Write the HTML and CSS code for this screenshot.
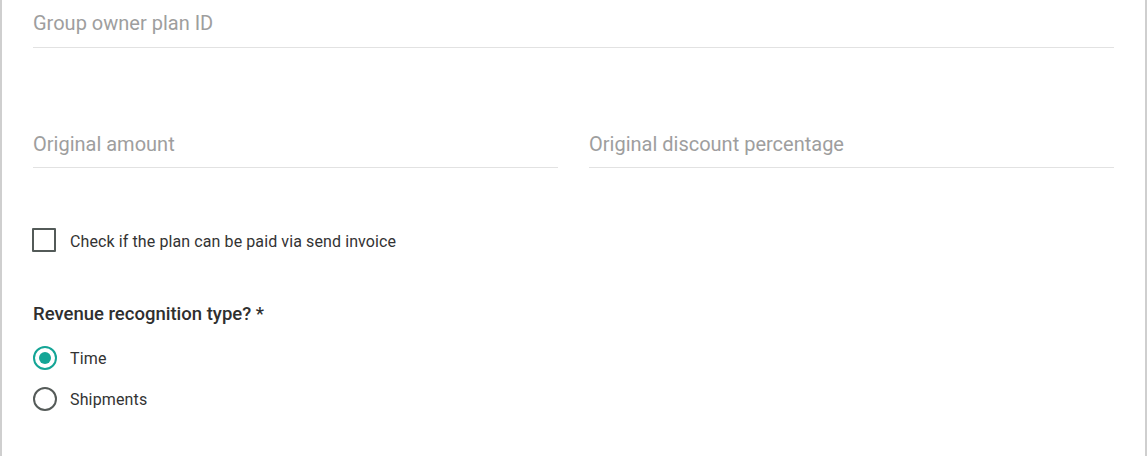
FILE: index.html
```html
<!DOCTYPE html>
<html>
<head>
<meta charset="utf-8">
<link rel="stylesheet" href="styles.css">
</head>
<body>
<div class="card">
  <div class="field full">
    <span class="placeholder">Group owner plan ID</span>
  </div>
  <div class="row">
    <div class="field">
      <span class="placeholder">Original amount</span>
    </div>
    <div class="field">
      <span class="placeholder">Original discount percentage</span>
    </div>
  </div>
  <label class="check">
    <span class="box"></span>
    <span class="check-text">Check if the plan can be paid via send invoice</span>
  </label>
  <div class="group-title">Revenue recognition type? *</div>
  <div class="radios">
    <label class="radio">
      <span class="circle checked"><span class="dot"></span></span>
      <span class="radio-text">Time</span>
    </label>
    <label class="radio">
      <span class="circle"></span>
      <span class="radio-text">Shipments</span>
    </label>
  </div>
</div>
</body>
</html>
```
FILE: styles.css
```css
html, body {
  margin: 0;
  padding: 0;
  background: #ffffff;
}
body {
  font-family: Roboto, "Liberation Sans", Arial, sans-serif;
  width: 1148px;
  height: 456px;
  overflow: hidden;
}
.card {
  box-sizing: border-box;
  width: 1147px;
  height: 456px;
  border-left: 2px solid #cfcfcf;
  border-right: 2px solid #cfcfcf;
  padding: 0 31px 0 31px;
  background: #fff;
}
.field {
  box-sizing: border-box;
  height: 48px;
  padding-top: 10px;
  border-bottom: 1px solid #e2e2e2;
}
.row .field {
  padding-top: 11px;
}
.placeholder {
  display: block;
  font-size: 20px;
  line-height: 26px;
  color: #9e9e9e;
}
.row {
  display: grid;
  grid-template-columns: 1fr 1fr;
  column-gap: 31px;
  margin-top: 72px;
}
.check {
  display: flex;
  align-items: center;
  margin-top: 60px;
  height: 24px;
}
.box {
  box-sizing: border-box;
  width: 24px;
  height: 24px;
  border: 2px solid #535a58;
  border-radius: 1px;
  margin-left: -1px;
  flex: none;
}
.check-text {
  margin-left: 14px;
  padding-top: 3px;
  font-size: 16px;
  letter-spacing: 0.1px;
  color: #333;
  line-height: 24px;
}
.group-title {
  margin-top: 50px;
  font-size: 18.5px;
  font-weight: 500;
  color: #2f2f2f;
  line-height: 24px;
}
.radios {
  display: flex;
  flex-direction: column;
  gap: 17px;
  margin-top: 20px;
}
.radio {
  display: flex;
  align-items: center;
  height: 24px;
}
.circle {
  box-sizing: border-box;
  width: 24px;
  height: 24px;
  border: 2px solid #555b59;
  border-radius: 50%;
  display: flex;
  align-items: center;
  justify-content: center;
  flex: none;
}
.circle.checked {
  border-color: #14a596;
}
.dot {
  width: 12px;
  height: 12px;
  border-radius: 50%;
  background: #14a596;
}
.radio-text {
  margin-left: 13px;
  padding-top: 2px;
  font-size: 16px;
  letter-spacing: 0.15px;
  color: #333;
  line-height: 24px;
}
```
